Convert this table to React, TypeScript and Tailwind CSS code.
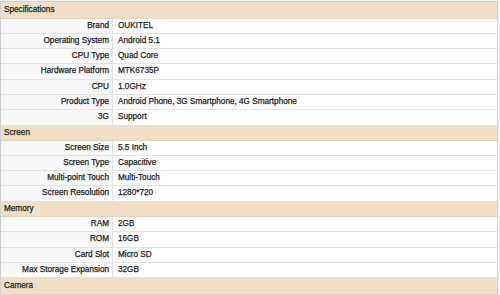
import React from 'react';

type Row =
  | { kind: 'head'; title: string; h: string }
  | { kind: 'item'; label: string; value: string; h: string };

const rows: Row[] = [
  { kind: 'head', title: 'Specifications', h: 'h-[17px]' },
  { kind: 'item', label: 'Brand', value: 'OUKITEL', h: 'h-[15px]' },
  { kind: 'item', label: 'Operating System', value: 'Android 5.1', h: 'h-[15px]' },
  { kind: 'item', label: 'CPU Type', value: 'Quad Core', h: 'h-[15px]' },
  { kind: 'item', label: 'Hardware Platform', value: 'MTK6735P', h: 'h-[16px]' },
  { kind: 'item', label: 'CPU', value: '1.0GHz', h: 'h-[15px]' },
  { kind: 'item', label: 'Product Type', value: 'Android Phone, 3G Smartphone, 4G Smartphone', h: 'h-[15px]' },
  { kind: 'item', label: '3G', value: 'Support', h: 'h-[16px]' },
  { kind: 'head', title: 'Screen', h: 'h-[15px]' },
  { kind: 'item', label: 'Screen Size', value: '5.5 Inch', h: 'h-[15px]' },
  { kind: 'item', label: 'Screen Type', value: 'Capacitive', h: 'h-[15px]' },
  { kind: 'item', label: 'Multi-point Touch', value: 'Multi-Touch', h: 'h-[15px]' },
  { kind: 'item', label: 'Screen Resolution', value: '1280*720', h: 'h-[16px]' },
  { kind: 'head', title: 'Memory', h: 'h-[15px]' },
  { kind: 'item', label: 'RAM', value: '2GB', h: 'h-[15px]' },
  { kind: 'item', label: 'ROM', value: '16GB', h: 'h-[16px]' },
  { kind: 'item', label: 'Card Slot', value: 'Micro SD', h: 'h-[15px]' },
  { kind: 'item', label: 'Max Storage Expansion', value: '32GB', h: 'h-[15px]' },
  { kind: 'head', title: 'Camera', h: 'h-[17px]' },
  { kind: 'item', label: '', value: '', h: 'h-[15px]' },
];

export default function App() {
  return (
    <div className="w-[500px] h-[295px] overflow-hidden bg-[#f4f4f4] pt-px font-['Liberation_Sans',Arial,sans-serif] text-[8.2px] text-[#1f1f1f] [-webkit-text-stroke:0.25px_#1f1f1f]">
      <div className="w-[498px] border border-[#cfcfcf] bg-white">
        {rows.map((r, i) =>
          r.kind === 'head' ? (
            <div
              key={i}
              className={`${r.h} flex items-center bg-[#f0dfc4] px-[3px] border-b border-[#e2d3bb]`}
            >
              {r.title}
            </div>
          ) : (
            <div key={i} className={`${r.h} flex border-b border-[#e3e3e3]`}>
              <div className="w-[112px] shrink-0 flex items-center justify-end pr-[3px] bg-[#f8f8f8] border-r border-[#e3e3e3]">
                {r.label}
              </div>
              <div className="flex-1 flex items-center pl-[5px]">{r.value}</div>
            </div>
          )
        )}
      </div>
    </div>
  );
}
